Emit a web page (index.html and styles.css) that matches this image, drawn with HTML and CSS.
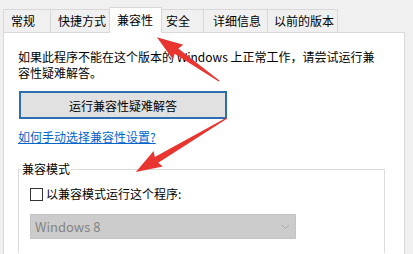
FILE: index.html
```html
<!DOCTYPE html>
<html lang="zh-CN">
<head>
  <meta charset="UTF-8">
  <title>属性 - 兼容性</title>
  <link rel="stylesheet" href="styles.css">
</head>
<body>
  <div class="tabs">
    <div class="tab tab-general">常规</div>
    <div class="tab tab-shortcut">快捷方式</div>
    <div class="tab tab-compat active">兼容性</div>
    <div class="tab tab-security">安全</div>
    <div class="tab tab-details">详细信息</div>
    <div class="tab tab-versions">以前的版本</div>
  </div>

  <div class="panel">
    <p class="intro">如果此程序不能在这个版本的 Windows 上正常工作，请尝试运行兼<br>容性疑难解答。</p>
    <button class="trouble-btn">运行兼容性疑难解答</button>
    <a class="help-link" href="#">如何手动选择兼容性设置?</a>

    <fieldset class="group">
      <legend>兼容模式</legend>
      <label class="check-row"><span class="checkbox"></span>以兼容模式运行这个程序:</label>
      <div class="select">
        <span>Windows 8</span>
        <svg width="9" height="6" viewBox="0 0 9 6"><path d="M1 1 L4.5 4.5 L8 1" fill="none" stroke="#a8a8a8" stroke-width="1"/></svg>
      </div>
    </fieldset>
  </div>

  <!-- red annotation arrows drawn over the dialog -->
  <svg class="arrows" width="413" height="254" viewBox="0 0 413 254">
    <g fill="#e8352f">
      <polygon transform="translate(219 81) rotate(215.2)" points="0,-0.6 52,-3.2 50,-9 76,0 50,9 52,3.2 0,0.6"/>
      <polygon transform="translate(227 118) rotate(149.3)" points="0,-0.6 82,-3.4 80,-9 106,0 80,9 82,3.4 0,0.6"/>
    </g>
  </svg>
</body>
</html>
```

FILE: styles.css
```css
body {
  margin: 0;
  width: 413px;
  height: 254px;
  overflow: hidden;
  position: relative;
  background-color: #f0f0f0;
  font-family: "Noto Sans CJK SC", "Microsoft YaHei", sans-serif;
  font-size: 12px;
  color: #000;
}
.tabs {
  display: flex;
  align-items: flex-end;
  height: 32px;
  padding-left: 3px;
}
.tab {
  box-sizing: border-box;
  height: 23px;
  line-height: 21px;
  padding-left: 7px;
  border: 1px solid #d9d9d9;
  border-bottom: none;
  margin-right: -1px;
  white-space: nowrap;
}
.tab-general { width: 48px; }
.tab-shortcut { width: 60px; }
.tab-security { width: 43px; padding-left: 4px; }
.tab-details { width: 65px; padding-left: 9px; }
.tab-versions { width: 71px; padding-left: 6px; }
.tab.active {
  position: relative;
  z-index: 1;
  width: 53px;
  height: 26px;
  margin-bottom: -1px;
  line-height: 24px;
  padding-left: 7px;
  background-color: #fff;
}
.panel {
  box-sizing: border-box;
  width: 402px;
  height: 222px;
  margin-left: 3px;
  padding: 0 19px 0 14px;
  background-color: #fff;
  border: 1px solid #d9d9d9;
  border-bottom: none;
  overflow: hidden;
}
.intro {
  margin: 16px 0 0;
  line-height: 16px;
}
.trouble-btn {
  display: block;
  box-sizing: border-box;
  width: 208px;
  height: 28px;
  margin: 10px 0 0 1px;
  padding: 0;
  background-color: #e1e1e1;
  border: 2px solid #2c6fb2;
  font-family: inherit;
  font-size: 12px;
  color: #000;
}
.help-link {
  display: block;
  margin-top: 10px;
  line-height: 16px;
  color: #0066cc;
  text-decoration: underline;
}
.group {
  margin: 16px 0 0;
  padding: 9px 11px 14px;
  border: 1px solid #dcdcdc;
  border-bottom: none;
}
.group legend {
  margin-left: -9px;
  padding: 0 1px;
  line-height: 16px;
}
.check-row {
  display: flex;
  align-items: center;
  gap: 3px;
  line-height: 16px;
}
.checkbox {
  box-sizing: border-box;
  width: 13px;
  height: 13px;
  background-color: #fff;
  border: 1px solid #333;
}
.select {
  box-sizing: border-box;
  display: flex;
  align-items: center;
  justify-content: space-between;
  width: 266px;
  height: 25px;
  margin-top: 12px;
  padding: 0 5px 0 4px;
  background-color: #cccccc;
  border: 1px solid #c4c4c4;
  color: #848484;
  font-size: 13px;
}
.arrows {
  position: absolute;
  left: 0;
  top: 0;
  pointer-events: none;
}
```
